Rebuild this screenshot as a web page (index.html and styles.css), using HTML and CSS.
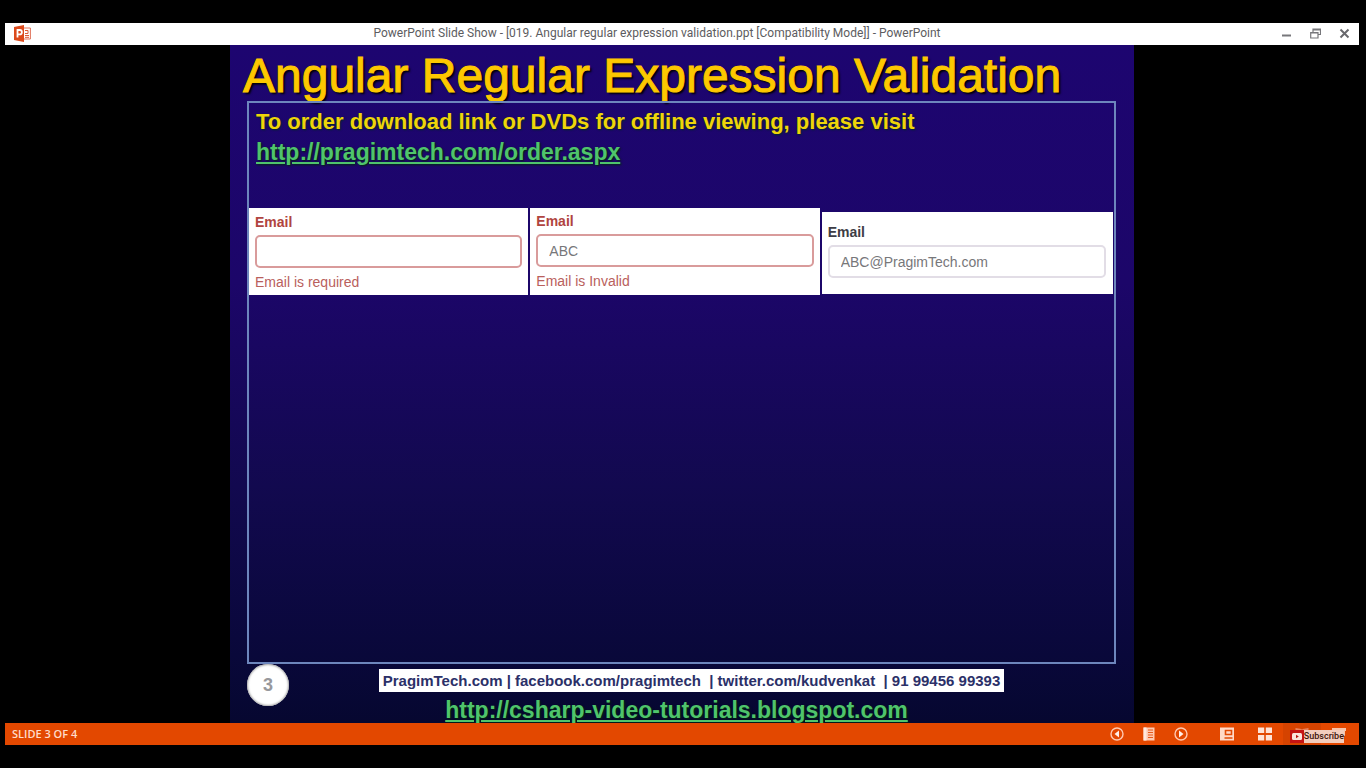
FILE: index.html
```html
<!DOCTYPE html>
<html lang="en">
<head>
<meta charset="utf-8">
<title>PowerPoint Slide Show</title>
<link rel="stylesheet" href="styles.css">
</head>
<body>
<header class="titlebar">
  <svg class="app-icon" viewBox="0 0 17 17" aria-hidden="true">
    <path d="M9 3h7.400v11H9" fill="#fff" stroke="#e0735a" stroke-width="1"/>
    <path d="M11 5.500h3v3h-3M11 10.500h4M11 12.300h4" fill="none" stroke="#dc5b36" stroke-width="1"/>
    <path d="M0 2L10 0v17L0 15z" fill="#dc4a1c"/>
    <path d="M3.500 12.500V5h2.200a2 2 0 010 4.400H3.500" fill="none" stroke="#fff" stroke-width="1.800"/>
  </svg>
  <span class="window-title">PowerPoint Slide Show - [019. Angular regular expression validation.ppt [Compatibility Mode]] - PowerPoint</span>
  <div class="window-controls">
    <button aria-label="Minimize"><svg viewBox="0 0 11 11"><path d="M1 7.500h9" stroke="#77777b" stroke-width="2"/></svg></button>
    <button aria-label="Restore"><svg viewBox="0 0 11 11"><path d="M3 4V1h7.500v5.500H8M3 2h7M.700 4.500H8V10H.700zM.700 5h7" fill="none" stroke="#77777b" stroke-width="1.200"/></svg></button>
    <button aria-label="Close"><svg viewBox="0 0 11 11"><path d="M1.500 1.500l8 8M9.500 1.500l-8 8" stroke="#68686c" stroke-width="2"/></svg></button>
  </div>
</header>
<main class="stage">
  <article class="slide">
    <h1 class="slide-title">Angular Regular Expression Validation</h1>
    <section class="slide-body">
      <p class="lead">To order download link or DVDs for offline viewing, please visit</p>
      <p class="lead"><a class="slide-link" href="http://pragimtech.com/order.aspx">http://pragimtech.com/order.aspx</a></p>
      <div class="examples">
        <div class="example error">
          <label for="email-empty">Email</label>
          <input id="email-empty" type="text">
          <span class="message">Email is required</span>
        </div>
        <div class="example error invalid">
          <label for="email-invalid">Email</label>
          <input id="email-invalid" type="text" value="ABC">
          <span class="message">Email is Invalid</span>
        </div>
        <div class="example valid">
          <label for="email-valid">Email</label>
          <input id="email-valid" type="text" value="ABC@PragimTech.com">
        </div>
      </div>
    </section>
    <footer class="slide-footer">
      <span class="slide-number">3</span>
      <div class="contact">
        <span class="contact-strip">PragimTech.com | facebook.com/pragimtech&nbsp; | twitter.com/kudvenkat&nbsp; | 91 99456 99393</span>
        <a class="slide-link blog" href="http://csharp-video-tutorials.blogspot.com">http://csharp-video-tutorials.blogspot.com</a>
      </div>
    </footer>
  </article>
</main>
<footer class="statusbar">
  <span>SLIDE 3 OF 4</span>
  <nav class="tools" aria-label="Slide show controls">
    <button aria-label="Previous"><svg viewBox="0 0 14 14"><circle cx="7" cy="7" r="6" fill="none" stroke="#ffc9b0" stroke-width="1.400"/><path d="M9 3.500v7L4.500 7z" fill="#fff0e8"/></svg></button>
    <button aria-label="Menu"><svg viewBox="0 0 14 14"><path d="M1.500.500h11v13h-11z" fill="#ffc9b0"/><path d="M1.500.500h3v13h-3z" fill="#ffe9df"/><path d="M6 3h5M6 5.500h5M6 8h5M6 10.500h5" stroke="#e65a1c"/></svg></button>
    <button aria-label="Next"><svg viewBox="0 0 14 14"><circle cx="7" cy="7" r="6" fill="none" stroke="#ffc9b0" stroke-width="1.400"/><path d="M5 3.500v7L9.500 7z" fill="#fff0e8"/></svg></button>
    <button class="view-first" aria-label="Normal view"><svg viewBox="0 0 14 14"><path d="M0 .500h14v13H0z" fill="#ffd9c8"/><path d="M4.500 11h8M5.500 3.500h6v4h-6z" fill="none" stroke="#e24a05" stroke-width="1.600"/></svg></button>
    <button class="sorter" aria-label="Slide sorter"><svg viewBox="0 0 14 14"><path d="M0 .500h6.200v5.500H0zM7.800.500H14v5.500H7.800zM0 8h6.200v5.500H0zM7.800 8H14v5.500H7.800z" fill="#ffe3d6"/></svg></button>
    <button class="current" aria-label="Reading view"><svg viewBox="0 0 14 14"><path d="M.500 1l6 1 .500 1 .500-1 6-1v11l-6 1-.500-.500-.500.500-6-1z" fill="#e9835c"/><path d="M7 3v10" stroke="#c93d05"/></svg></button>
    <button aria-label="Slide show"><svg viewBox="0 0 14 14"><path d="M0 1.500h14v2H0zM1.500 3.500h11v5h-11zM7 8v5M4 13h6" fill="#f6c3ab" stroke="#f6c3ab"/></svg></button>
    <a class="subscribe" href="#subscribe"><svg viewBox="0 0 14 13" aria-hidden="true"><path d="M0 0h14v13H0z" fill="#c51414"/><rect x="2" y="3" width="10" height="7" rx="1.500" fill="#fbe4de"/><path d="M6 4.800v3.400L8.800 6.500z" fill="#b81414"/></svg><span>Subscribe</span></a>
  </nav>
</footer>
</body>
</html>
```
FILE: styles.css
```css
* { box-sizing: border-box; }
body {
  margin: 0;
  min-height: 100vh;
  height: 100vh;
  padding: 23px 7px 23px 5px;
  display: flex;
  flex-direction: column;
  background: #000;
  font-family: "Liberation Sans", Arial, sans-serif;
}
button { border: 0; padding: 0; background: none; display: flex; }
p, h1 { margin: 0; }

.titlebar {
  flex: none;
  height: 22px;
  display: grid;
  grid-template-columns: 80px 1fr 80px;
  align-items: center;
  padding: 0 9px 2px;
  background: #fff;
}
.app-icon { width: 17px; height: 17px; }
.window-title {
  text-align: center;
  white-space: nowrap;
  padding-right: 50px;
  font: 12px/20px Roboto, sans-serif;
  color: #5c5c60;
}
.window-controls { display: flex; justify-content: flex-end; gap: 18px; }
.window-controls svg { width: 11px; height: 11px; }

.stage { flex: 1; min-height: 0; display: flex; justify-content: center; }
.slide {
  height: 100%;
  aspect-ratio: 4 / 3;
  display: flex;
  flex-direction: column;
  padding: 0 18px 0 17px;
  background: linear-gradient(#1d0570 0%, #1c0669 35%, #12094f 65%, #09083a 90%, #060730 100%);
}
.slide-title {
  height: 56px;
  margin-left: -4px;
  white-space: nowrap;
  font: 400 48px/62px "Liberation Sans", Arial, sans-serif;
  -webkit-text-stroke: 1px #fdc800;
  color: #fdc800;
  text-shadow: 2px 2px 2px #000;
}
.slide-body { flex: 1; border: 2px solid #6d86bd; padding: 4px 0 0; }
.lead {
  padding-left: 7px;
  white-space: nowrap;
  font: 700 22px/30px "Liberation Sans", Arial, sans-serif;
  color: #eed50a;
  text-shadow: 1px 1px 2px #032c20;
}
.slide-link {
  font-size: 23px;
  color: #4fc46c;
  text-decoration: underline;
  text-decoration-thickness: 2px;
  text-underline-offset: 2px;
  text-shadow: 1px 1px 2px #00280c;
}
.examples {
  display: grid;
  grid-template-columns: 279fr 289fr 291fr;
  gap: 2px;
  margin-top: 40px;
  padding-right: 1px;
}
.example {
  display: flex;
  flex-direction: column;
  align-items: flex-start;
  padding: 5px 6px 4px;
  background: #fff;
  font-size: 14px;
  line-height: 18px;
  color: #b9605c;
}
.example label { font-weight: 700; color: #b04440; }
.example input {
  width: 100%;
  height: 33px;
  margin: 4px 0 5px;
  padding: 0 11px;
  border: 2px solid #d99b9b;
  border-radius: 5px;
  background: #fff;
  font: 14px "Liberation Sans", Arial, sans-serif;
  color: #77777a;
}
.invalid { padding-top: 4px; }
.valid { margin: 4px 0 1px; padding: 11px 7px 0 6px; }
.valid label { color: #3d3d45; }
.valid input { border-color: #e2dde6; }

.slide-footer { flex: none; height: 59px; display: flex; }
.slide-number {
  flex: none;
  width: 42px;
  height: 42px;
  border-radius: 50%;
  background: #fff;
  box-shadow: inset 0 0 2px 1px #aaa;
  text-align: center;
  font: 700 18px/42px "Liberation Sans", sans-serif;
  color: #98989c;
}
.contact {
  flex: 1;
  display: flex;
  flex-direction: column;
  align-items: center;
  padding: 5px 22px 0 0;
  white-space: nowrap;
}
.contact-strip {
  padding: 0 4px;
  background: #fff;
  font: 700 15px/23px "Liberation Sans", sans-serif;
  color: #2b3068;
}
.blog { margin-right: 30px; font-weight: 700; line-height: 36px; }

.statusbar {
  flex: none;
  height: 22px;
  display: flex;
  align-items: center;
  justify-content: space-between;
  padding: 0 13px 0 7px;
  background: #e34800;
  font: 600 11px/20px "Open Sans", sans-serif;
  color: #ffdccb;
}
.tools { position: relative; display: flex; align-items: center; gap: 18px; height: 100%; }
.tools svg { width: 14px; height: 14px; }
.tools .view-first { margin-left: 14px; }
.tools .sorter { margin-left: 6px; }
.current { align-self: stretch; align-items: center; padding: 0 12px; margin: 0 -7px; background: #d54300; }
.subscribe {
  position: absolute;
  right: 2px;
  top: 7px;
  display: flex;
  text-decoration: none;
  color: #3d150b;
  font: 500 9px/13px Roboto, sans-serif;
}
.tools .subscribe svg { height: 13px; }
.subscribe span { background: #f3cdbd; }
```
